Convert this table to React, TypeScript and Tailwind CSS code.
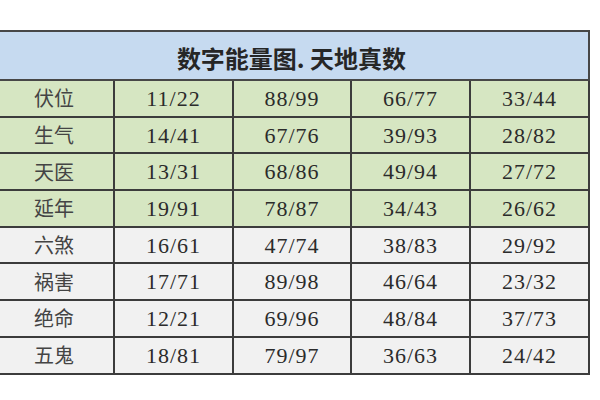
const rows: { name: string; vals: string[]; good: boolean }[] = [
  { name: '伏位', vals: ['11/22', '88/99', '66/77', '33/44'], good: true },
  { name: '生气', vals: ['14/41', '67/76', '39/93', '28/82'], good: true },
  { name: '天医', vals: ['13/31', '68/86', '49/94', '27/72'], good: true },
  { name: '延年', vals: ['19/91', '78/87', '34/43', '26/62'], good: true },
  { name: '六煞', vals: ['16/61', '47/74', '38/83', '29/92'], good: false },
  { name: '祸害', vals: ['17/71', '89/98', '46/64', '23/32'], good: false },
  { name: '绝命', vals: ['12/21', '69/96', '48/84', '37/73'], good: false },
  { name: '五鬼', vals: ['18/81', '79/97', '36/63', '24/42'], good: false },
];

export default function App() {
  return (
    <div className="w-[600px] h-[400px] bg-white overflow-hidden pt-[30px]">
      <table className="border-collapse table-fixed w-[595px] -ml-[7px] text-[#2b2b2b]">
        <colgroup>
          <col className="w-[120px]" />
          <col className="w-[119px]" />
          <col className="w-[118px]" />
          <col className="w-[119px]" />
          <col className="w-[119px]" />
        </colgroup>
        <thead>
          <tr className="h-[49px] bg-[#c6daf0]">
            <th
              colSpan={5}
              className="border-2 border-[#474747] pt-[4px] text-center text-[24px] font-bold text-[#262626] font-['Noto_Sans_CJK_SC',serif]"
            >
              数字能量图. 天地真数
            </th>
          </tr>
        </thead>
        <tbody>
          {rows.map((r) => (
            <tr key={r.name} className={`h-[36.7px] ${r.good ? 'bg-[#d6e6c2]' : 'bg-[#f1f1f1]'}`}>
              <td className="border-2 border-[#3c3c3c] text-center text-[20px] text-[#444] font-['Noto_Sans_CJK_SC',sans-serif]">
                {r.name}
              </td>
              {r.vals.map((v) => (
                <td
                  key={v}
                  className="border-2 border-[#3c3c3c] text-center text-[22px] tracking-[1px] font-['Liberation_Serif',serif]"
                >
                  {v}
                </td>
              ))}
            </tr>
          ))}
        </tbody>
      </table>
    </div>
  );
}
